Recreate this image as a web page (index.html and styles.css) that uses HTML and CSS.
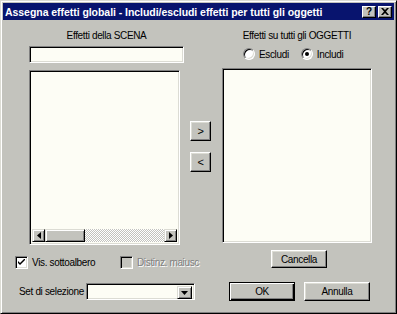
FILE: index.html
```html
<!DOCTYPE html>
<html>
<head>
<meta charset="utf-8">
<link rel="stylesheet" href="styles.css">
</head>
<body>
<div class="window">
  <div class="titlebar">
    <span class="title">Assegna effetti globali - Includi/escludi effetti per tutti gli oggetti</span>
    <div class="tbtns">
      <span class="tbtn">?</span>
      <span class="tbtn close">
        <svg width="8" height="7" viewBox="0 0 8 7"><path d="M0 0h2l2 2 2-2h2L5 3.5 8 7H6L4 5 2 7H0l3-3.5z" fill="#000"/></svg>
      </span>
    </div>
  </div>

  <div class="top">
    <div class="col left">
      <div class="label">Effetti della SCENA</div>
      <div class="field input"></div>
      <div class="field list listleft">
        <div class="hscroll">
          <span class="sbtn"><svg width="4" height="7" viewBox="0 0 4 7"><path d="M4 0v7L0 3.5z" fill="#000"/></svg></span>
          <span class="thumb"></span>
          <span class="track"></span>
          <span class="sbtn"><svg width="4" height="7" viewBox="0 0 4 7"><path d="M0 0v7l4-3.5z" fill="#000"/></svg></span>
        </div>
      </div>
    </div>
    <div class="col mid">
      <span class="btn small">&gt;</span>
      <span class="btn small">&lt;</span>
    </div>
    <div class="col right">
      <div class="label">Effetti su tutti gli OGGETTI</div>
      <div class="radios">
        <label class="radio"><span class="rdot"></span>Escludi</label>
        <label class="radio"><span class="rdot on"></span>Includi</label>
      </div>
      <div class="field list listright"></div>
    </div>
  </div>

  <div class="row1">
    <label class="check first"><span class="cbox"><svg width="7" height="7" viewBox="0 0 7 7"><path d="M0 2l2 2 5-5v2l-5 5-2-2z" fill="#000"/></svg></span>Vis. sottoalbero</label>
    <label class="check disabled"><span class="cbox"></span><span class="dtext">Distinz. maiusc</span></label>
    <span class="btn cancel">Cancella</span>
  </div>

  <div class="row2">
    <span class="setlabel">Set di selezione</span>
    <div class="field combo"><span class="sbtn drop"><svg width="7" height="4" viewBox="0 0 7 4"><path d="M0 0h7L3.5 4z" fill="#000"/></svg></span></div>
    <span class="btn ok">OK</span>
    <span class="btn annulla">Annulla</span>
  </div>
</div>
</body>
</html>
```

FILE: styles.css
```css
* { box-sizing: border-box; }
html, body { margin: 0; padding: 0; }
body {
  width: 397px;
  height: 314px;
  overflow: hidden;
  background: #c3c3bd;
  font-family: "Liberation Sans", Arial, sans-serif;
  font-size: 10px;
  letter-spacing: -0.35px;
  color: #000;
  white-space: nowrap;
}
.window {
  width: 397px;
  height: 314px;
  background: #c3c3bd;
  border: 1px solid;
  border-color: #dcdcd4 #000 #000 #dcdcd4;
  box-shadow: inset 1px 1px #fff, inset -1px -1px #808080;
  padding: 2px;
  display: flex;
  flex-direction: column;
}
.titlebar {
  height: 17px;
  background: #08146e;
  display: flex;
  align-items: center;
  justify-content: space-between;
  padding: 0 2px 0 2px;
}
.title {
  color: #fff;
  font-weight: bold;
  font-size: 10.5px;
  letter-spacing: -0.05px;
}
.tbtns { display: flex; gap: 2px; }
.tbtn {
  width: 14px;
  height: 12px;
  background: #c3c3bd;
  border: 1px solid;
  border-color: #fff #000 #000 #fff;
  box-shadow: inset -1px -1px #808080;
  font-weight: bold;
  font-size: 10px;
  line-height: 10px;
  letter-spacing: 0;
  display: flex;
  align-items: center;
  justify-content: center;
}
.field {
  background: #fdfdf5;
  border: 1px solid;
  border-color: #808080 #fff #fff #808080;
  box-shadow: inset 1px 1px #000, inset -1px -1px #dcdcd4;
}
.btn {
  background: #c3c3bd;
  border: 1px solid;
  border-color: #fff #000 #000 #fff;
  box-shadow: inset -1px -1px #808080, inset 1px 1px #dcdcd4;
  display: flex;
  align-items: center;
  justify-content: center;
}
.top {
  display: flex;
  margin-top: 9px;
  padding-left: 26px;
}
.col { display: flex; flex-direction: column; }
.left { width: 155px; }
.label {
  height: 14px;
  line-height: 14px;
  text-align: center;
}
.input {
  margin-top: 3px;
  height: 17px;
}
.list {
  margin-top: 7px;
  height: 175px;
}
.listleft {
  width: 151px;
  display: flex;
  flex-direction: column;
  justify-content: flex-end;
  padding: 2px;
}
.hscroll {
  height: 13px;
  display: flex;
  background: repeating-conic-gradient(#fff 0 25%, #c3c3bd 0 50%) 0 0 / 2px 2px;
}
.sbtn {
  width: 13px;
  height: 13px;
  background: #c3c3bd;
  border: 1px solid;
  border-color: #dcdcd4 #000 #000 #dcdcd4;
  box-shadow: inset 1px 1px #fff, inset -1px -1px #808080;
  display: flex;
  align-items: center;
  justify-content: center;
  flex: none;
}
.thumb {
  width: 40px;
  height: 13px;
  background: #c3c3bd;
  border: 1px solid;
  border-color: #dcdcd4 #000 #000 #dcdcd4;
  box-shadow: inset 1px 1px #fff, inset -1px -1px #808080;
}
.track { flex: 1; }
.mid {
  width: 21px;
  margin-left: 6px;
  padding-top: 92px;
  gap: 11px;
}
.small {
  width: 21px;
  height: 20px;
  font-size: 11px;
}
.right {
  width: 150px;
  margin-left: 11px;
}
.radios {
  display: flex;
  height: 14px;
  margin-top: 4px;
  padding-left: 21px;
  align-items: center;
}
.radio {
  display: flex;
  align-items: center;
}
.radio + .radio { margin-left: 12px; }
.rdot {
  width: 12px;
  height: 12px;
  border-radius: 50%;
  background: #fff;
  border: 1px solid;
  border-color: #808080 #fff #fff #808080;
  box-shadow: inset 1px 1px #000, inset -1px -1px #dcdcd4;
  margin-right: 4px;
  position: relative;
}
.rdot.on::after {
  content: "";
  position: absolute;
  left: 3px;
  top: 3px;
  width: 4px;
  height: 4px;
  border-radius: 50%;
  background: #000;
}
.listright { height: 175px; }
.row1 {
  display: flex;
  align-items: flex-start;
  margin-top: 5px;
  padding-left: 12px;
  height: 18px;
}
.check {
  display: flex;
  align-items: center;
  margin-top: 6px;
}
.check.first { width: 105px; }
.check.disabled { width: 151px; }
.cbox {
  width: 13px;
  height: 13px;
  background: #fff;
  border: 1px solid;
  border-color: #808080 #fff #fff #808080;
  box-shadow: inset 1px 1px #000, inset -1px -1px #dcdcd4;
  margin-right: 4px;
  display: flex;
  align-items: center;
  justify-content: center;
}
.check.disabled .cbox { background: #c3c3bd; }
.dtext {
  color: #808080;
  text-shadow: 1px 1px #fff;
}
.cancel {
  width: 56px;
  height: 18px;
}
.row2 {
  display: flex;
  align-items: center;
  margin-top: 14px;
  padding-left: 16px;
  height: 19px;
}
.setlabel { width: 67px; }
.combo {
  width: 109px;
  height: 17px;
  padding: 2px;
  display: flex;
  justify-content: flex-end;
}
.drop { width: 15px; height: 13px; }
.ok {
  margin-left: 34px;
  width: 66px;
  height: 19px;
  border: 1px solid #000;
  box-shadow: inset 1px 1px #fff, inset -1px -1px #000, inset -2px -2px #808080;
}
.annulla {
  margin-left: 9px;
  width: 66px;
  height: 19px;
}
```
